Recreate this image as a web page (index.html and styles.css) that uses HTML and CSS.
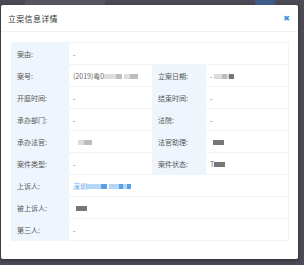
FILE: index.html
```html
<!DOCTYPE html>
<html lang="zh-CN">
<head>
 <meta charset="UTF-8">
 <title>立案信息详情</title>
 <link rel="stylesheet" href="styles.css">
</head>
<body>
<div class="backdrop_top">
  <span class="bg_strip"></span>
  <span class="bg_btn"></span>
</div>
<div class="dialog">
  <div class="dialog_header">
    <span class="dialog_title">立案信息详情</span>
    <span class="dialog_close">✖</span>
  </div>
  <div class="dialog_body">
    <table class="info_table">
      <colgroup>
        <col class="col_label"><col class="col_value"><col class="col_label2"><col class="col_value2">
      </colgroup>
      <tr>
        <td class="label">案由:</td>
        <td class="value" colspan="3">-</td>
      </tr>
      <tr>
        <td class="label">案号:</td>
        <td class="value">(2019)粤0<span class="mask light" style="width:12px"></span><span class="mask" style="width:6px"></span> <span class="mask light" style="width:6px"></span><span class="mask" style="width:8px"></span></td>
        <td class="label">立案日期:</td>
        <td class="value">- <span class="mask light" style="width:8px"></span><span class="mask" style="width:5px"></span><span class="mask light" style="width:2px"></span><span class="mask dark" style="width:5px"></span></td>
      </tr>
      <tr>
        <td class="label">开庭时间:</td>
        <td class="value">-</td>
        <td class="label">结束时间:</td>
        <td class="value">-</td>
      </tr>
      <tr>
        <td class="label">承办部门:</td>
        <td class="value">-</td>
        <td class="label">法院:</td>
        <td class="value">-</td>
      </tr>
      <tr>
        <td class="label">承办法官:</td>
        <td class="value"><span class="mask light" style="width:6px;margin-left:5px"></span><span class="mask" style="width:8px"></span></td>
        <td class="label">法官助理:</td>
        <td class="value"><span class="mask dark" style="width:11px;margin-left:3px"></span></td>
      </tr>
      <tr>
        <td class="label">案件类型:</td>
        <td class="value">-</td>
        <td class="label">案件状态:</td>
        <td class="value">T<span class="mask dark" style="width:11px"></span></td>
      </tr>
      <tr>
        <td class="label">上诉人:</td>
        <td class="value link" colspan="3">深圳<span class="mask blue_light" style="width:14px"></span><span class="mask blue" style="width:6px"></span> <span class="mask blue_light" style="width:10px"></span><span class="mask blue" style="width:4px"></span><span class="mask blue_light" style="width:4px"></span><span class="mask blue" style="width:4px"></span></td>
      </tr>
      <tr>
        <td class="label">被上诉人:</td>
        <td class="value" colspan="3"><span class="mask dark" style="width:11px;margin-left:3px"></span></td>
      </tr>
      <tr>
        <td class="label">第三人:</td>
        <td class="value" colspan="3">-</td>
      </tr>
    </table>
  </div>
</div>
</body>
</html>
```

FILE: styles.css
```css
html, body{
  margin: 0;
  height: 100%;
  overflow: hidden;
}
body{
  background: #4b4a56;
  font-family: "Noto Sans CJK SC", "Liberation Sans", sans-serif;
  color: #555;
}
.backdrop_top{
  height: 5px;
  display: flex;
}
.bg_strip{
  margin-left: 25px;
  width: 80px;
  background: #55545f;
}
.bg_btn{
  margin-left: 150px;
  width: 20px;
  background: #3d5b86;
}
.dialog{
  margin-left: 1px;
  width: 297px;
  height: 254px;
  background: #fff;
  border-radius: 2px;
  box-shadow: 0 1px 4px rgba(0,0,0,0.4);
  box-sizing: border-box;
}
.dialog_header{
  height: 26px;
  display: flex;
  align-items: center;
  justify-content: space-between;
  padding: 0 8px 0 7px;
  border-bottom: 1px solid #f0f0f0;
}
.dialog_title{
  font-size: 8px;
  color: #333;
  letter-spacing: 0.3px;
}
.dialog_close{
  font-size: 8px;
  color: #3b8fe0;
  font-family: "DejaVu Sans", sans-serif;
}
.dialog_body{
  padding: 10px 9px 0 10px;
}
.info_table{
  width: 277px;
  border-collapse: collapse;
  table-layout: fixed;
  font-size: 7px;
}
.col_label{ width: 57px; }
.col_value{ width: 84px; }
.col_label2{ width: 53px; }
.col_value2{ width: 83px; }
.info_table td{
  height: 21px;
  padding: 0 0 0 4px;
  border: 1px solid #f3f3f3;
  white-space: nowrap;
  overflow: hidden;
  color: #666;
}
.info_table td.label{
  background: #eef5fd;
  padding-left: 5px;
  border-color: #eef5fd;
  color: #555;
}
.info_table td.link{
  color: #5aa0e6;
}
.mask{
  display: inline-block;
  height: 5px;
  vertical-align: middle;
  background: #bdbdbd;
  filter: blur(0.5px);
}
.mask.light{ background: #dcdcdc; }
.mask.dark{ background: #777; }
.mask.blue{ background: #5aa0e6; }
.mask.blue_light{ background: #b5d6f4; }
```
